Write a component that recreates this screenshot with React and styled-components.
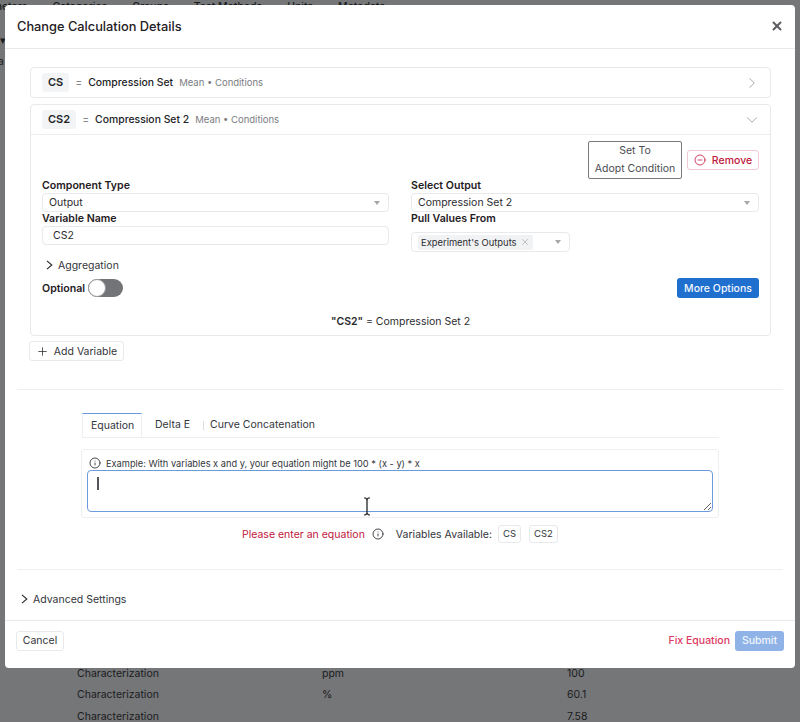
import React from "react";
import styled, { createGlobalStyle } from "styled-components";
import { ChevronDown, ChevronRight, CircleMinus, Info, Plus, X } from "lucide-react";

const GlobalStyle = createGlobalStyle`
	html, body {
		margin: 0;
		padding: 0;
		background: #757678;
		font-family: Inter, "Liberation Sans", sans-serif;
		color: #222326;
		overflow: hidden;
	}
`;

//Page behind the modal
const Page = styled.div`
	height: 722px;
	position: relative;
	overflow: hidden;
	background: #757678;
	color: #1b1c1e;
	font-size: 10.5px;
`;

const PageNav = styled.div`
	display: flex;
	gap: 25px;
	margin-left: -30px;
	height: 14px;
	line-height: 14px;
	font-weight: 500;
	font-size: 10.5px;
`;

const SideMark = styled.span`
	position: absolute;
	left: ${(p) => p.$left};
	top: ${(p) => p.$top};
`;

const PageRows = styled.div`
	position: absolute;
	left: 77px;
	top: 663px;
`;

const PageRow = styled.div`
	display: grid;
	grid-template-columns: 245px 245px 100px;
	height: 21.4px;
	line-height: 21.4px;
`;

//Modal shell
const Modal = styled.div`
	position: absolute;
	left: 5px;
	top: 5px;
	width: 790px;
	height: 662.5px;
	background: #fff;
	border-radius: 4px;
	display: flex;
	flex-direction: column;
`;

const ModalHeader = styled.div`
	height: 43px;
	flex: none;
	display: flex;
	align-items: center;
	justify-content: space-between;
	padding: 0 11px 0 12px;
	border-bottom: 1px solid #e9eaec;
	font-size: 12.8px;
	font-weight: 500;
	color: #1f2023;
`;

const CloseIcon = styled(X)`
	color: #5d5f63;
	margin-bottom: 2px;
`;

const ModalBody = styled.div`
	flex: 1;
	padding: 18px 12px 0;
	font-size: 10.5px;
`;

const ModalFooter = styled.div`
	height: 48px;
	flex: none;
	display: flex;
	align-items: center;
	justify-content: space-between;
	padding: 0 11px 7px;
	box-sizing: border-box;
	border-top: 1px solid #e9eaec;
`;

const FooterRight = styled.div`
	display: flex;
	align-items: center;
	gap: 5px;
`;

//Variable accordion
const Card = styled.div`
	margin: 0 12px ${(p) => p.$gap || "6px"} 13px;
	border: 1px solid #e8e9eb;
	border-radius: 4px;
`;

const CardHead = styled.div`
	height: 29px;
	display: flex;
	align-items: center;
	padding: 0 9px 0 11px;
	border-bottom: ${(p) => (p.$open ? "1px solid #eceded" : "none")};
`;

const VarTag = styled.span`
	background: #f3f4f5;
	border-radius: 3px;
	height: 19px;
	line-height: 19px;
	padding: 0 6px;
	font-weight: 600;
	font-size: 11px;
	color: #222326;
`;

const Equals = styled.span`
	margin: 0 6px;
	color: #6b6d71;
`;

const VarName = styled.span`
	font-weight: 500;
	font-size: 10.4px;
	color: #222326;
`;

const VarMeta = styled.span`
	margin-left: 6px;
	font-size: 9.5px;
	color: #7a7c81;
	flex: 1;
`;

const HeadChevron = styled.span`
	display: flex;
	color: #a5a7ab;
`;

const CardBody = styled.div`
	padding: 6px 11px 6px 11px;
`;

const ActionRow = styled.div`
	display: flex;
	justify-content: flex-end;
	align-items: center;
	gap: 5px;
	height: 38px;
`;

const AdoptButton = styled.button`
	width: 94px;
	height: 38px;
	background: #fff;
	border: 1px solid #77797d;
	border-radius: 2px;
	font: inherit;
	font-size: 10.5px;
	line-height: 18px;
	color: #4a4c50;
	padding: 0;
`;

const RemoveButton = styled.button`
	width: 72px;
	height: 20px;
	display: flex;
	align-items: center;
	justify-content: center;
	gap: 6px;
	background: #fff;
	border: 1px solid #f3c9d2;
	border-radius: 3px;
	font: inherit;
	font-size: 10.5px;
	font-weight: 500;
	color: #c0163c;
	padding: 0;
`;

const FormGrid = styled.div`
	display: grid;
	grid-template-columns: 347px 348px;
	column-gap: 22px;
`;

const Field = styled.div`
	min-width: 0;
`;

const Label = styled.div`
	font-weight: 600;
	font-size: 10.6px;
	line-height: 14px;
	color: #1f2023;
`;

const SelectBox = styled.div`
	height: ${(p) => p.$height || "19px"};
	width: ${(p) => p.$width || "auto"};
	margin-top: ${(p) => p.$top || 0};
	box-sizing: border-box;
	display: flex;
	align-items: center;
	justify-content: space-between;
	padding: 0 8px 0 ${(p) => p.$left || "6px"};
	border: 1px solid #e8e9eb;
	border-radius: 4px;
	color: #2b2c30;
	font-size: 10.5px;
`;

const Caret = styled.span`
	width: 0;
	height: 0;
	border-left: 3.5px solid transparent;
	border-right: 3.5px solid transparent;
	border-top: 4px solid #a5a7ab;
`;

const Chip = styled.span`
	display: flex;
	align-items: center;
	gap: 3px;
	height: 15px;
	padding: 0 3px;
	background: #f1f2f4;
	border-radius: 2px;
	font-size: 9.4px;
	color: #2b2c30;
`;

const ChipClose = styled(X)`
	color: #8b8d91;
`;

const Disclosure = styled.div`
	display: flex;
	align-items: center;
	gap: 5px;
	color: #33353a;
	font-size: 10.5px;
	height: 16px;
	margin: ${(p) => p.$margin || 0};
`;

const DisclosureArrow = styled.svg`
	flex: none;
`;

const OptionsRow = styled.div`
	display: flex;
	align-items: center;
	justify-content: space-between;
	height: 20px;
	margin-top: 5px;
`;

const OptionalWrap = styled.div`
	display: flex;
	align-items: center;
	gap: 3px;
	font-weight: 600;
	font-size: 10.6px;
	color: #1f2023;
`;

const Toggle = styled.span`
	display: block;
	position: relative;
	width: 35px;
	height: 18px;
	border-radius: 9px;
	background: #737477;
`;

const Knob = styled.span`
	position: absolute;
	left: 0;
	top: 0;
	width: 18px;
	height: 18px;
	box-sizing: border-box;
	border: 1px solid #9a9ca0;
	border-radius: 50%;
	background: #fff;
`;

const PrimaryButton = styled.button`
	width: 82px;
	height: 20px;
	background: #1f6fcf;
	border: none;
	border-radius: 3px;
	color: #f3f7fd;
	font: inherit;
	font-size: 10.5px;
	font-weight: 500;
	padding: 0;
`;

const Summary = styled.div`
	text-align: center;
	margin-top: 17px;
	line-height: 14px;
	font-size: 10.5px;
	color: #2b2c30;

	b {
		font-weight: 600;
	}
`;

const GhostButton = styled.button`
	display: flex;
	align-items: center;
	justify-content: center;
	gap: 5px;
	height: 20px;
	width: ${(p) => p.$width};
	margin-left: ${(p) => p.$left || 0};
	background: #fff;
	border: 1px solid #e8e9eb;
	border-radius: 3px;
	font: inherit;
	font-size: 10.5px;
	color: #33353a;
	padding: 0;
`;

const Divider = styled.div`
	height: 1px;
	background: #eeeff0;
	margin: ${(p) => p.$margin};
`;

//Equation area
const TabsWrap = styled.div`
	margin: 23px 64px 0 65px;
`;

const TabBar = styled.div`
	display: flex;
	align-items: center;
	height: 24px;
	border-bottom: 1px solid #eeeff0;
	font-size: 10.5px;
	color: #33353a;
`;

const Tab = styled.div`
	height: 24px;
	line-height: 24px;
	box-sizing: border-box;
	padding: 0 ${(p) => (p.$active ? "8px" : "0")};
	width: ${(p) => (p.$active ? "60px" : "auto")};
	margin-right: ${(p) => p.$gap || 0};
	border-top: ${(p) => (p.$active ? "1px solid #6b97d6" : "none")};
	border-left: ${(p) => (p.$active ? "1px solid #eeeff0" : "none")};
	border-right: ${(p) => (p.$active ? "1px solid #eeeff0" : "none")};
	background: #fff;
`;

const TabSeparator = styled.span`
	width: 1px;
	height: 9px;
	background: #dcdde0;
	margin-right: 6px;
`;

const EquationPanel = styled.div`
	margin: 11px 0 0 -1px;
	height: 69px;
	box-sizing: border-box;
	border: 1px solid #eeeff0;
	border-radius: 3px;
	padding: 6px 5px 0;
`;

const HintRow = styled.div`
	display: flex;
	align-items: center;
	gap: 5px;
	height: 14px;
	padding-left: 2px;
	font-size: 9.25px;
	color: #33353a;
`;

const InputWrap = styled.div`
	position: relative;
`;

const EquationInput = styled.textarea`
	display: block;
	box-sizing: border-box;
	width: 100%;
	height: 42px;
	border: 1.5px solid #6b9bdc;
	border-radius: 4px;
	outline: none;
	resize: vertical;
	background: #fff;
`;

const Caretline = styled.span`
	position: absolute;
	left: 10px;
	top: 7px;
	width: 1.5px;
	height: 13px;
	background: #55575b;
`;

const BeamCursor = styled.svg`
	position: absolute;
	left: 276px;
	top: 27px;
`;

const StatusRow = styled.div`
	display: flex;
	align-items: center;
	height: 20px;
	margin-top: 6px;
	padding-left: 160px;
	font-size: 10.5px;
	color: #33353a;
`;

const ErrorText = styled.span`
	color: #c0163c;
	margin-right: 7px;
`;

const VarsLabel = styled.span`
	margin: 0 6px 0 12px;
`;

const VarChip = styled.span`
	height: 18px;
	line-height: 16px;
	box-sizing: border-box;
	padding: 0 4px;
	margin-right: 8px;
	border: 1px solid #e8e9eb;
	border-radius: 3px;
	font-size: 9.5px;
`;

const FixText = styled.span`
	color: #dc3a63;
	font-size: 10.5px;
	font-weight: 500;
`;

const SubmitButton = styled.button`
	width: 49px;
	height: 20px;
	background: #8fb3e6;
	border: none;
	border-radius: 3px;
	color: #f1f5fc;
	font: inherit;
	font-size: 10.5px;
	font-weight: 500;
	padding: 0;
`;

const rows = [
	["Characterization", "ppm", "100"],
	["Characterization", "%", "60.1"],
	["Characterization", "", "7.58"],
];

const Arrow = () => (
	<DisclosureArrow width="7" height="10" viewBox="0 0 7 10">
		<path d="M1 .8 L5.8 5 L1 9.2" fill="none" stroke="#26282b" strokeWidth="1.1" />
	</DisclosureArrow>
);

const App = () => {
	return (
		<Page>
			<GlobalStyle />
			<PageNav>
				<span>Parameters</span>
				<span>Categories</span>
				<span>Groups</span>
				<span>Test Methods</span>
				<span>Units</span>
				<span>Metadata</span>
			</PageNav>
			<SideMark $left="0" $top="34px">▾</SideMark>
			<SideMark $left="-2px" $top="55px">a</SideMark>
			<PageRows>
				{rows.map((row, i) => (
					<PageRow key={i}>
						<span>{row[0]}</span>
						<span>{row[1]}</span>
						<span>{row[2]}</span>
					</PageRow>
				))}
			</PageRows>

			<Modal>
				<ModalHeader>
					Change Calculation Details
					<CloseIcon size={14} strokeWidth={3.5} />
				</ModalHeader>

				<ModalBody>
					<Card>
						<CardHead>
							<VarTag>CS</VarTag>
							<Equals>=</Equals>
							<VarName>Compression Set</VarName>
							<VarMeta>Mean • Conditions</VarMeta>
							<HeadChevron>
								<ChevronRight size={18} strokeWidth={1.3} />
							</HeadChevron>
						</CardHead>
					</Card>

					<Card $gap="5px">
						<CardHead $open>
							<VarTag>CS2</VarTag>
							<Equals>=</Equals>
							<VarName>Compression Set 2</VarName>
							<VarMeta>Mean • Conditions</VarMeta>
							<HeadChevron>
								<ChevronDown size={18} strokeWidth={1.3} />
							</HeadChevron>
						</CardHead>
						<CardBody>
							<ActionRow>
								<AdoptButton>
									Set To
									<br />
									Adopt Condition
								</AdoptButton>
								<RemoveButton>
									<CircleMinus size={12} strokeWidth={1.6} />
									Remove
								</RemoveButton>
							</ActionRow>

							<FormGrid>
								<Field>
									<Label>Component Type</Label>
									<SelectBox>
										Output
										<Caret />
									</SelectBox>
									<Label>Variable Name</Label>
									<SelectBox $left="10px">CS2</SelectBox>
								</Field>
								<Field>
									<Label>Select Output</Label>
									<SelectBox>
										Compression Set 2
										<Caret />
									</SelectBox>
									<Label>Pull Values From</Label>
									<SelectBox $width="159px" $top="6px" $height="20px">
										<Chip>
											Experiment's Outputs
											<ChipClose size={10} strokeWidth={1.2} />
										</Chip>
										<Caret />
									</SelectBox>
								</Field>
							</FormGrid>

							<Disclosure $margin="5px 0 0 4px">
								<Arrow />
								Aggregation
							</Disclosure>

							<OptionsRow>
								<OptionalWrap>
									Optional
									<Toggle>
										<Knob />
									</Toggle>
								</OptionalWrap>
								<PrimaryButton>More Options</PrimaryButton>
							</OptionsRow>

							<Summary>
								<b>"CS2"</b> = Compression Set 2
							</Summary>
						</CardBody>
					</Card>

					<GhostButton $width="95px" $left="12px">
						<Plus size={13} strokeWidth={1.5} />
						Add Variable
					</GhostButton>

					<Divider $margin="28px 0 0" />

					<TabsWrap>
						<TabBar>
							<Tab $active $gap="13px">
								Equation
							</Tab>
							<Tab $gap="13px">Delta E</Tab>
							<TabSeparator />
							<Tab>Curve Concatenation</Tab>
						</TabBar>

						<EquationPanel>
							<HintRow>
								<Info size={12} strokeWidth={1.8} />
								Example: With variables x and y, your equation might be 100 * (x - y) * x
							</HintRow>
							<InputWrap>
								<EquationInput />
								<Caretline />
								<BeamCursor width="8" height="19" viewBox="0 0 8 20">
									<path d="M1 1 Q3.4 1 4 3 Q4.6 1 7 1 M4 3 V17 M1 19 Q3.4 19 4 17 Q4.6 19 7 19" fill="none" stroke="#26282b" strokeWidth="1.4" />
								</BeamCursor>
							</InputWrap>
						</EquationPanel>

						<StatusRow>
							<ErrorText>Please enter an equation</ErrorText>
							<Info size={12} strokeWidth={1.8} />
							<VarsLabel>Variables Available:</VarsLabel>
							<VarChip>CS</VarChip>
							<VarChip>CS2</VarChip>
						</StatusRow>
					</TabsWrap>

					<Divider $margin="25px 0 0" />

					<Disclosure $margin="21px 0 0 4px">
						<Arrow />
						Advanced Settings
					</Disclosure>
				</ModalBody>

				<ModalFooter>
					<GhostButton $width="48px">Cancel</GhostButton>
					<FooterRight>
						<FixText>Fix Equation</FixText>
						<SubmitButton>Submit</SubmitButton>
					</FooterRight>
				</ModalFooter>
			</Modal>
		</Page>
	);
};

export default App;
